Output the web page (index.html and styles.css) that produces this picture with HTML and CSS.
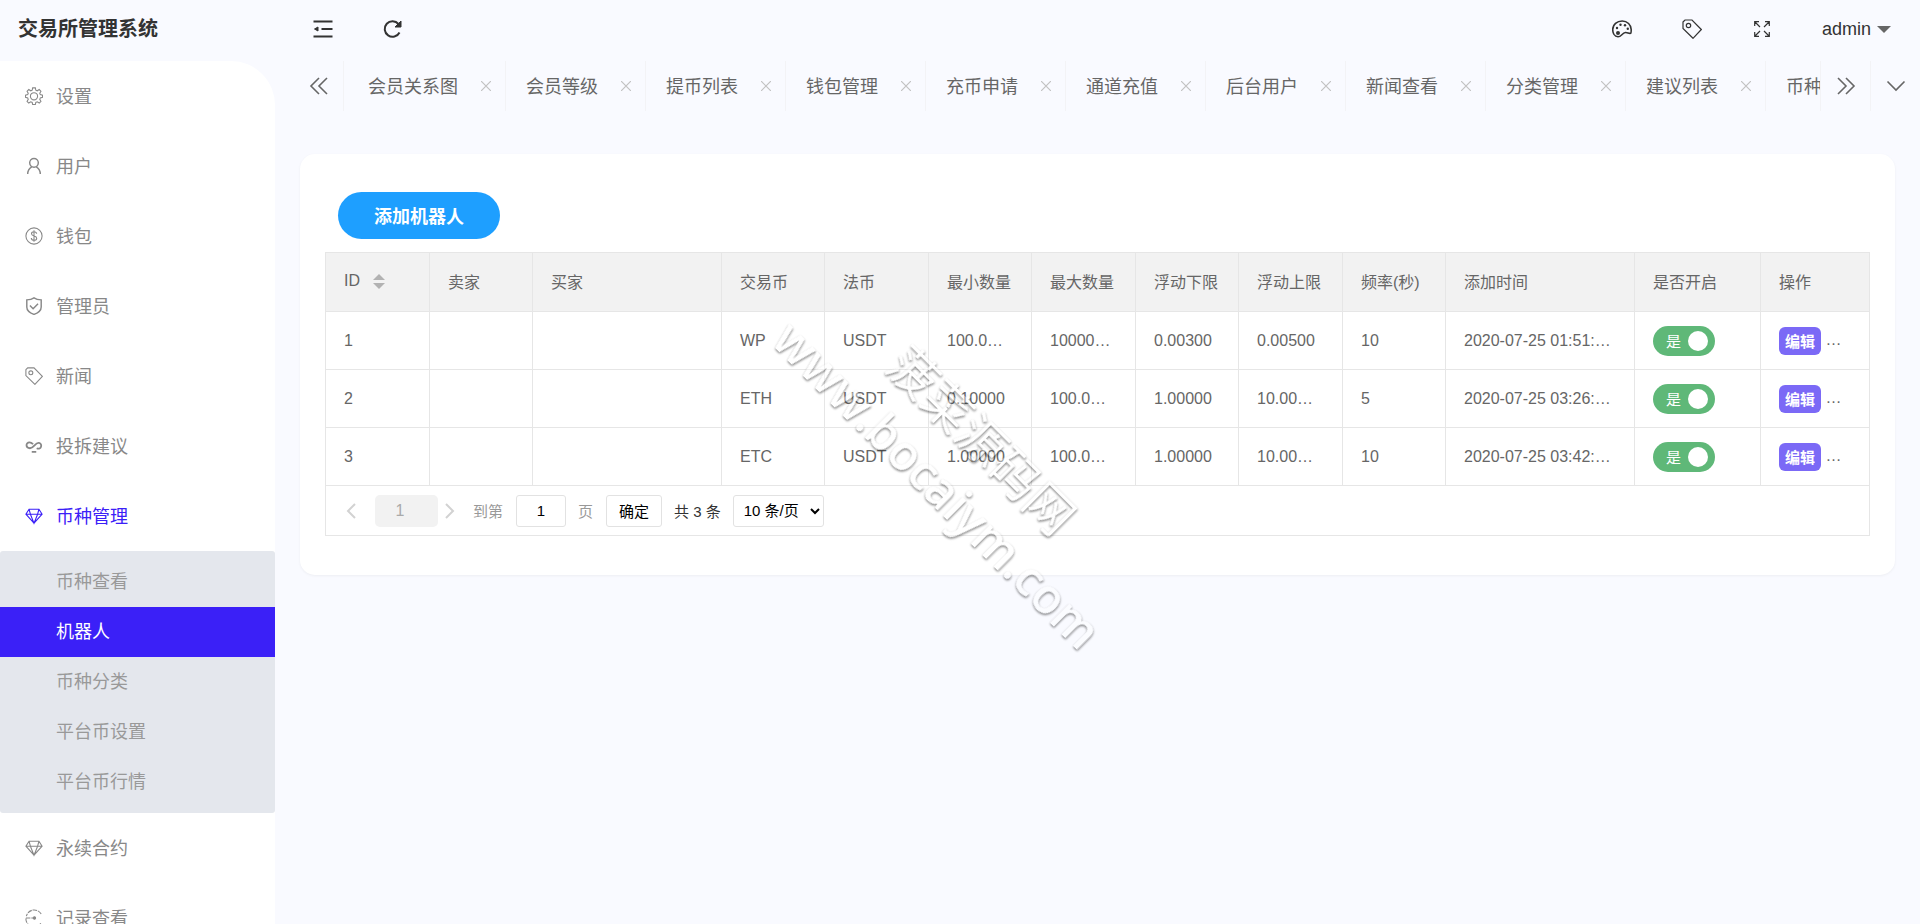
FILE: index.html
```html
<!DOCTYPE html>
<html lang="zh-CN">
<head>
  <meta charset="UTF-8">
  <meta name="viewport" content="width=device-width, initial-scale=1.0">
  <title>交易所管理系统</title>
  <link rel="stylesheet" href="styles.css">
</head>
<body>
  <!-- shared icons -->
  <svg class="sprite" aria-hidden="true">
    <symbol id="i-tag" viewBox="0 0 20 20"><path d="M1 3 3 1h7L19.300 10.500 11 19.300 1 9.500z"/><circle cx="6.500" cy="6.500" r="2.200"/></symbol>
    <symbol id="i-diamond" viewBox="0 0 20 20"><path d="M4.500 2.500h11L19 8l-9 10L1 8zM1 8h18M6 8l4 10 4-10M4.500 2.500 6 8M15.500 2.500 14 8"/></symbol>
    <symbol id="i-close" viewBox="0 0 10 10"><path d="m0 0 10 10M10 0 0 10"/></symbol>
    <filter id="emboss" x="-5%" y="-5%" width="110%" height="110%" color-interpolation-filters="sRGB">
      <feOffset in="SourceAlpha" dx="1" dy="1" result="moved"/>
      <feGaussianBlur in="moved" stdDeviation="0.8" result="soft"/>
      <feComposite in="soft" in2="SourceAlpha" operator="out" result="edge"/>
      <feComponentTransfer in="edge" result="shade"><feFuncA type="linear" slope="0.5"/></feComponentTransfer>
      <feComponentTransfer in="SourceGraphic" result="face"><feFuncA type="linear" slope="0.4"/></feComponentTransfer>
      <feMerge><feMergeNode in="face"/><feMergeNode in="shade"/></feMerge>
    </filter>
  </svg>

  <div class="layout">
    <aside class="side">
      <h1 class="logo">交易所管理系统</h1>
      <nav class="menu">
        <a href="#"><svg class="icon" viewBox="0 0 20 20"><path d="M8.500 1h3l.5 2.500 1.600.7L15.800 2.800l1.900 1.900-1.300 2.200.6 1.600 2.500.5v2.500l-2.500.6-.6 1.600 1.300 2.200-1.900 1.900-2.200-1.300-1.600.6-.5 2.400h-3l-.5-2.400-1.600-.6-2.200 1.300-1.900-1.900 1.300-2.200-.6-1.600L.5 11.500V9L3 8.500l.6-1.600-1.300-2.200 1.900-1.900 2.200 1.400L8 3.500z"/><circle cx="10" cy="10.300" r="4"/></svg>设置</a>
        <a href="#"><svg class="icon bold" viewBox="0 0 20 20"><circle cx="10" cy="6.500" r="4.800"/><path d="M3 19c0-4 2-6.500 4.500-8M17 19c0-4-2-6.500-4.500-8"/></svg>用户</a>
        <a href="#"><svg class="icon" viewBox="0 0 20 20"><circle cx="10" cy="10" r="9"/><path d="M13 7.500C12.800 6 11.700 5.200 10 5.200S7.200 6 7.200 7.500c0 3.200 5.800 1.600 5.800 4.900 0 1.500-1.300 2.400-3 2.400s-3-.9-3-2.500M10 3.500v13"/></svg>钱包</a>
        <a href="#"><svg class="icon bold" viewBox="0 0 20 20"><path d="M10 1c2.500 1.800 5 2.200 8 2.200v8C18 15.500 14 18 10 19.300 6 18 2 15.500 2 11.200v-8c3 0 5.500-.4 8-2.200zM5.500 9.500l3.500 3.500 5.500-5.500"/></svg>管理员</a>
        <a href="#"><svg class="icon"><use href="#i-tag"/></svg>新闻</a>
        <a href="#"><svg class="icon heavy" viewBox="0 0 20 20"><path d="M13 12.500c5 2.500 7-5 2.500-6-4-.8-5.500 5.800-10 6-5 0-5-6.500-.5-6.500 1.500 0 2.500.6 4 2M7.500 16.500h5"/></svg>投拆建议</a>
        <a href="#" class="open"><svg class="icon"><use href="#i-diamond"/></svg>币种管理</a>
        <div class="submenu">
          <a href="#">币种查看</a>
          <a href="#" class="active">机器人</a>
          <a href="#">币种分类</a>
          <a href="#">平台币设置</a>
          <a href="#">平台币行情</a>
        </div>
        <a href="#"><svg class="icon"><use href="#i-diamond"/></svg>永续合约</a>
        <a href="#"><svg class="icon" viewBox="0 0 20 20"><path d="M18 5.500A9 9 0 0 0 1.500 8M1 10.500A9 9 0 0 0 18 15M1 10h9" stroke-dasharray="5 1"/><circle cx="10.500" cy="10" r="1.300" fill="currentColor"/></svg>记录查看</a>
      </nav>
    </aside>

    <div class="main">
      <header class="header">
        <button class="tool" aria-label="收起菜单"><svg class="icon-lg heavy" viewBox="0 0 20 20"><path d="M.5 2.500h19M8.500 10h11M.5 17.500h19"/><path d="M1.500 10 5 8v4z" fill="currentColor" stroke-width="1"/></svg></button>
        <button class="tool" aria-label="刷新"><svg class="icon-lg heavy" viewBox="0 0 20 20"><path d="M16.500 13.500A7.800 7.800 0 1 1 15.500 5"/><path d="M18 2v6h-6z" fill="currentColor" stroke-width="1"/></svg></button>
        <span class="spacer"></span>
        <button class="tool" aria-label="主题"><svg class="icon-lg bold" viewBox="0 0 20 20"><path d="M6 17.800C2.500 17.500.7 14 .7 10.500.7 5.500 5 2 10.200 2c5 0 9 3.800 9 8.500 0 2 0 3.500-.5 3.800-2 .5-3-1-5.200-.8C10 14 9.500 17.800 6 17.800z"/><g class="dots"><circle cx="6" cy="14" r="2"/><circle cx="5" cy="9" r="1.200"/><circle cx="8.500" cy="5.800" r="1.200"/><circle cx="13" cy="6.200" r="1.200"/><circle cx="15.800" cy="9.800" r="1.200"/></g></svg></button>
        <button class="tool" aria-label="便签"><svg class="icon-lg"><use href="#i-tag"/></svg></button>
        <button class="tool" aria-label="全屏"><svg class="icon-sm" viewBox="0 0 16 16"><path d="M6 6 1 1M.7 5V.7H5M10 6l5-5M11 .7h4.300V5M6 10l-5 5M.7 11v4.300H5M10 10l5 5M11 15.300h4.300V11"/></svg></button>
        <a href="#" class="user">admin<span class="caret"></span></a>
      </header>

      <div class="tabs">
        <button class="tab-ctrl" aria-label="向左"><svg class="icon-lg bold" viewBox="0 0 20 20"><path d="M10 2 2 10l8 8M18 2l-8 8 8 8"/></svg></button>
        <ul class="tab-list">
          <li><a href="#">会员关系图</a><button aria-label="关闭"><svg><use href="#i-close"/></svg></button></li>
          <li><a href="#">会员等级</a><button aria-label="关闭"><svg><use href="#i-close"/></svg></button></li>
          <li><a href="#">提币列表</a><button aria-label="关闭"><svg><use href="#i-close"/></svg></button></li>
          <li><a href="#">钱包管理</a><button aria-label="关闭"><svg><use href="#i-close"/></svg></button></li>
          <li><a href="#">充币申请</a><button aria-label="关闭"><svg><use href="#i-close"/></svg></button></li>
          <li><a href="#">通道充值</a><button aria-label="关闭"><svg><use href="#i-close"/></svg></button></li>
          <li><a href="#">后台用户</a><button aria-label="关闭"><svg><use href="#i-close"/></svg></button></li>
          <li><a href="#">新闻查看</a><button aria-label="关闭"><svg><use href="#i-close"/></svg></button></li>
          <li><a href="#">分类管理</a><button aria-label="关闭"><svg><use href="#i-close"/></svg></button></li>
          <li><a href="#">建议列表</a><button aria-label="关闭"><svg><use href="#i-close"/></svg></button></li>
          <li><a href="#">币种查看</a><button aria-label="关闭"><svg><use href="#i-close"/></svg></button></li>
        </ul>
        <button class="tab-ctrl right" aria-label="向右"><svg class="icon-lg bold" viewBox="0 0 20 20"><path d="m2 2 8 8-8 8M10 2l8 8-8 8"/></svg></button>
        <button class="tab-ctrl right" aria-label="更多"><svg class="icon-lg bold" viewBox="0 0 20 20"><path d="m1.500 5.500 8.500 8.500 8.500-8.500"/></svg></button>
      </div>

      <main class="card">
        <button class="btn-add">添加机器人</button>

        <div class="table-box">
          <table>
            <colgroup>
              <col class="w-id"><col class="w-num"><col class="w-wide"><col class="w-num"><col class="w-id"><col class="w-num"><col class="w-id">
              <col class="w-num"><col class="w-id"><col class="w-num"><col class="w-wide"><col class="w-switch"><col>
            </colgroup>
            <thead>
              <tr>
                <th>ID<span class="sort"><i class="up"></i><i class="down"></i></span></th>
                <th>卖家</th><th>买家</th><th>交易币</th><th>法币</th><th>最小数量</th><th>最大数量</th>
                <th>浮动下限</th><th>浮动上限</th><th>频率(秒)</th><th>添加时间</th><th>是否开启</th><th>操作</th>
              </tr>
            </thead>
            <tbody>
              <tr>
                <td>1</td><td></td><td></td><td>WP</td><td>USDT</td><td>100.0…</td><td>10000…</td>
                <td>0.00300</td><td>0.00500</td><td>10</td><td>2020-07-25 01:51:…</td>
                <td><label class="switch"><input type="checkbox" checked><span>是</span></label></td>
                <td><button class="btn-edit">编辑</button> …</td>
              </tr>
              <tr>
                <td>2</td><td></td><td></td><td>ETH</td><td>USDT</td><td>0.10000</td><td>100.0…</td>
                <td>1.00000</td><td>10.00…</td><td>5</td><td>2020-07-25 03:26:…</td>
                <td><label class="switch"><input type="checkbox" checked><span>是</span></label></td>
                <td><button class="btn-edit">编辑</button> …</td>
              </tr>
              <tr>
                <td>3</td><td></td><td></td><td>ETC</td><td>USDT</td><td>1.00000</td><td>100.0…</td>
                <td>1.00000</td><td>10.00…</td><td>10</td><td>2020-07-25 03:42:…</td>
                <td><label class="switch"><input type="checkbox" checked><span>是</span></label></td>
                <td><button class="btn-edit">编辑</button> …</td>
              </tr>
            </tbody>
          </table>

          <div class="pager">
            <button class="arrow" aria-label="上一页"><svg viewBox="0 0 10 16"><path d="M9 1 2 8l7 7"/></svg></button>
            <span class="current">1</span>
            <button class="arrow" aria-label="下一页"><svg viewBox="0 0 10 16"><path d="m1 1 7 7-7 7"/></svg></button>
            <label class="skip" for="page">到第</label>
            <input type="text" id="page" value="1">
            <span class="page-unit">页</span>
            <button class="confirm">确定</button>
            <span class="count">共 3 条</span>
            <select aria-label="每页条数">
              <option>10 条/页</option>
              <option>20 条/页</option>
              <option>50 条/页</option>
            </select>
          </div>
        </div>
      </main>
    </div>
  </div>

  <div class="watermark">菠菜源码网<br><b>www.bocaiym.com</b></div>
</body>
</html>
```

FILE: styles.css
```css
* { margin: 0; padding: 0; box-sizing: border-box; }
body {
  font-family: "Liberation Sans", "Noto Sans CJK SC", sans-serif;
  font-size: 16px;
  color: #666;
  background: #f9faff;
  overflow: hidden;
}
a { color: inherit; text-decoration: none; }
ul { list-style: none; }
button {
  font: inherit;
  color: inherit;
  background: none;
  border: none;
  cursor: pointer;
}
svg {
  fill: none;
  stroke: currentColor;
  stroke-width: 1.2;
}
.sprite { position: absolute; width: 0; height: 0; }
.icon { width: 18px; height: 18px; }
.icon-lg { width: 20px; height: 20px; }
.icon-sm { width: 16px; height: 16px; }
.bold { stroke-width: 1.6; }
.heavy { stroke-width: 2; }
.dots { fill: currentColor; stroke: none; }

.layout {
  display: flex;
  height: 100vh;
}

/* Sidebar */
.side {
  width: 275px;
  flex: none;
  display: flex;
  flex-direction: column;
}
.logo {
  height: 61px;
  flex: none;
  padding-left: 18px;
  line-height: 58px;
  font-size: 20px;
  color: #333;
}
.menu {
  flex: 1;
  min-height: 0;
  overflow: hidden;
  background: #fff;
  border-top-right-radius: 44px;
  font-size: 18px;
  color: #888;
}
.menu > a {
  display: flex;
  align-items: center;
  gap: 13px;
  height: 70px;
  padding: 0 0 2px 25px;
}
.menu > a svg { margin-top: 2px; }
.menu > a.open { color: #3b20f7; }
.submenu {
  padding: 6px 0;
  background: #e4e7ed;
  border-radius: 3px;
  color: #999;
}
.submenu a {
  display: block;
  padding-left: 56px;
  line-height: 50px;
}
.submenu a.active {
  background: #3b20f7;
  color: #fff;
}

/* Header */
.main {
  flex: 1;
  min-width: 0;
}
.header {
  display: flex;
  height: 61px;
  padding: 0 29px 0 13px;
  color: #333;
}
.tool {
  display: flex;
  align-items: center;
  justify-content: center;
  width: 70px;
  height: 58px;
}
.spacer { flex: 1; }
.user {
  display: flex;
  align-items: center;
  gap: 6px;
  height: 58px;
  padding-left: 25px;
  font-size: 18px;
}
.caret {
  border: 7px solid transparent;
  border-top-color: #666;
  border-bottom: none;
}

/* Tabs */
.tabs {
  display: flex;
  height: 50px;
  padding-left: 19px;
}
.tab-ctrl {
  display: flex;
  align-items: center;
  justify-content: center;
  flex: none;
  width: 50px;
  border-right: 1px solid #f3f3f6;
}
.tab-ctrl.right {
  border-right: none;
  border-left: 1px solid #f3f3f6;
}
.tab-list {
  display: flex;
  flex: 1;
  min-width: 0;
  padding-left: 4px;
  overflow: hidden;
}
.tab-list li {
  display: flex;
  align-items: center;
  flex: none;
  padding: 0 11px 0 20px;
  border-right: 1px solid #f3f3f6;
  font-size: 18px;
}
.tab-list a { padding-bottom: 2px; }
.tab-list button {
  display: flex;
  justify-content: center;
  width: 16px;
  margin-left: 20px;
  color: #c2c2c2;
}
.tab-list svg { width: 10px; height: 10px; }

/* Card */
.card {
  margin: 43px 25px 0;
  padding: 38px 25px 39px;
  background: #fff;
  border-radius: 15px;
  box-shadow: 0 1px 3px rgba(0,0,0,0.05);
}
.btn-add {
  display: block;
  height: 47px;
  margin-left: 13px;
  padding: 0 36px 2px;
  border-radius: 24px;
  background: #1e9fff;
  color: #fff;
  font-size: 18px;
  font-weight: bold;
}
.table-box {
  margin-top: 13px;
  border: 1px solid #e6e6e6;
}
table {
  width: 100%;
  table-layout: fixed;
  border-collapse: separate;
  border-spacing: 0;
}
.w-id { width: 104px; }
.w-num { width: 103px; }
.w-wide { width: 189px; }
.w-switch { width: 126px; }
th, td {
  height: 58px;
  padding: 0 0 0 18px;
  border-right: 1px solid #e6e6e6;
  border-bottom: 1px solid #e6e6e6;
  text-align: left;
  font-weight: normal;
  white-space: nowrap;
}
th:last-child, td:last-child { border-right: none; }
th {
  height: 59px;
  padding-bottom: 2px;
  background: #f2f2f2;
}
.sort {
  display: inline-flex;
  flex-direction: column;
  gap: 3px;
  margin-left: 13px;
  vertical-align: middle;
}
.sort i { border: 6px solid transparent; }
.sort .up { border-top: none; border-bottom-color: #b2b2b2; }
.sort .down { border-bottom: none; border-top-color: #b2b2b2; }
.switch {
  display: flex;
  align-items: center;
  justify-content: space-between;
  flex-direction: row-reverse;
  width: 62px;
  height: 30px;
  padding: 0 7px 0 13px;
  border-radius: 15px;
  background: #5fb878;
  color: #fff;
  font-size: 15px;
  cursor: pointer;
}
.switch input {
  appearance: none;
  width: 20px;
  height: 20px;
  border-radius: 50%;
  background: #fff;
}
.btn-edit {
  height: 28px;
  padding: 0 6px;
  border-radius: 6px;
  background: #7b69f6;
  color: #fff;
  font-size: 15px;
  font-weight: bold;
  vertical-align: middle;
}

/* Pager */
.pager {
  display: flex;
  align-items: center;
  height: 49px;
  padding-left: 20px;
  font-size: 15px;
  color: #333;
}
.pager .arrow {
  display: flex;
  color: #d2d2d2;
}
.arrow svg {
  width: 10px;
  height: 16px;
  stroke-width: 2;
}
.current {
  width: 63px;
  height: 32px;
  margin: 0 7px 0 19px;
  padding-right: 13px;
  border-radius: 5px;
  background: #f2f2f2;
  color: #aaa;
  font-size: 16px;
  line-height: 32px;
  text-align: center;
}
.skip { margin: 0 13px 0 18px; color: #999; }
.page-unit { margin: 0 13px 0 12px; color: #999; }
.count { margin: 0 12px; }
.pager input, .pager select, .confirm {
  height: 32px;
  border: 1px solid #e2e2e2;
  border-radius: 3px;
  background: #fff;
  color: #000;
  font: inherit;
}
.pager input {
  width: 50px;
  text-align: center;
}
.confirm { padding: 0 12px; }
.pager select {
  width: 91px;
  padding-left: 6px;
}

.watermark {
  position: fixed;
  top: 50%;
  left: 50%;
  transform: translate(-50%, -50%) rotate(45deg);
  filter: url(#emboss);
  color: #fff;
  font: 48px/63px "Open Sans", "Noto Sans CJK SC", sans-serif;
  text-align: center;
  white-space: nowrap;
  pointer-events: none;
}
.watermark b { font-weight: 600; }
```
